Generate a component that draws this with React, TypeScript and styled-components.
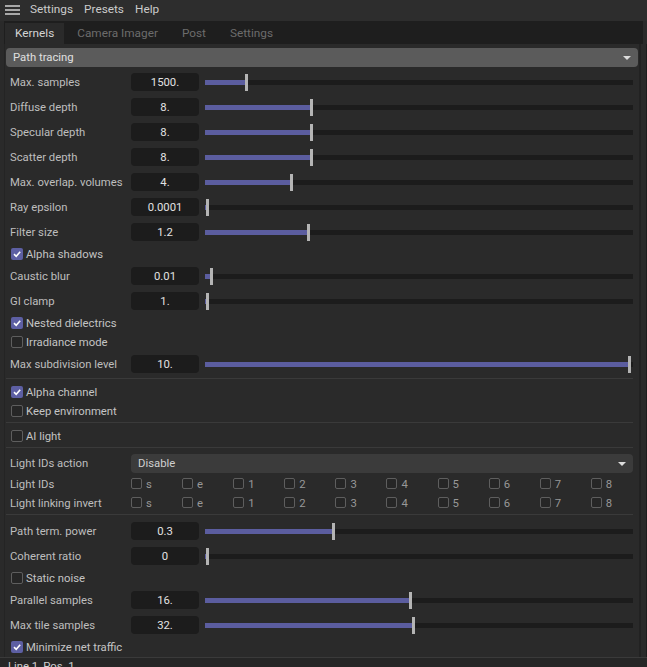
import { createGlobalStyle, styled } from 'styled-components';

type Row =
  | { kind: 'slider'; label: string; value: string; pos: number }
  | { kind: 'check'; label: string; checked?: boolean }
  | { kind: 'select'; label: string; value: string }
  | { kind: 'ids'; label: string };

const sections: Row[][] = [
  [
    { kind: 'slider', label: 'Max. samples', value: '1500.', pos: 0.094 },
    { kind: 'slider', label: 'Diffuse depth', value: '8.', pos: 0.248 },
    { kind: 'slider', label: 'Specular depth', value: '8.', pos: 0.248 },
    { kind: 'slider', label: 'Scatter depth', value: '8.', pos: 0.248 },
    { kind: 'slider', label: 'Max. overlap. volumes', value: '4.', pos: 0.199 },
    { kind: 'slider', label: 'Ray epsilon', value: '0.0001', pos: 0.002 },
    { kind: 'slider', label: 'Filter size', value: '1.2', pos: 0.239 },
    { kind: 'check', label: 'Alpha shadows', checked: true },
    { kind: 'slider', label: 'Caustic blur', value: '0.01', pos: 0.011 },
    { kind: 'slider', label: 'GI clamp', value: '1.', pos: 0.002 },
    { kind: 'check', label: 'Nested dielectrics', checked: true },
    { kind: 'check', label: 'Irradiance mode' },
    { kind: 'slider', label: 'Max subdivision level', value: '10.', pos: 0.995 },
  ],
  [
    { kind: 'check', label: 'Alpha channel', checked: true },
    { kind: 'check', label: 'Keep environment' },
  ],
  [{ kind: 'check', label: 'AI light' }],
  [
    { kind: 'select', label: 'Light IDs action', value: 'Disable' },
    { kind: 'ids', label: 'Light IDs' },
    { kind: 'ids', label: 'Light linking invert' },
  ],
  [
    { kind: 'slider', label: 'Path term. power', value: '0.3', pos: 0.298 },
    { kind: 'slider', label: 'Coherent ratio', value: '0', pos: 0.002 },
    { kind: 'check', label: 'Static noise' },
    { kind: 'slider', label: 'Parallel samples', value: '16.', pos: 0.481 },
    { kind: 'slider', label: 'Max tile samples', value: '32.', pos: 0.488 },
    { kind: 'check', label: 'Minimize net traffic', checked: true },
  ],
];

const lightIds = ['s', 'e', '1', '2', '3', '4', '5', '6', '7', '8'];

const Check = ({ checked, small }: { checked?: boolean; small?: boolean }) => (
  <CheckBox $checked={checked} $small={small}>
    {checked && (
      <svg width="10" height="10" viewBox="0 0 10 10">
        <path d="M2 5.2 L4.2 7.3 L8.2 2.8" fill="none" stroke="#fff" strokeWidth="1.6" />
      </svg>
    )}
  </CheckBox>
);

const Slider = ({ pos }: { pos: number }) => (
  <Track>
    <Fill style={{ width: `calc(${pos * 100}% - ${pos * 3 - 1.5}px)` }} />
    <Thumb style={{ left: `calc(${pos * 100}% - ${pos * 3}px)` }} />
  </Track>
);

const renderRow = (row: Row, i: number) => {
  switch (row.kind) {
    case 'slider':
      return (
        <SliderRow key={i}>
          <Label>{row.label}</Label>
          <ValueBox>{row.value}</ValueBox>
          <Slider pos={row.pos} />
        </SliderRow>
      );
    case 'check':
      return (
        <CheckRow key={i}>
          <Check checked={row.checked} />
          <CheckLabel>{row.label}</CheckLabel>
        </CheckRow>
      );
    case 'select':
      return (
        <SelectRow key={i}>
          <Label>{row.label}</Label>
          <Select>
            {row.value}
            <Caret />
          </Select>
        </SelectRow>
      );
    case 'ids':
      return (
        <IdsRow key={i}>
          <Label>{row.label}</Label>
          <IdGrid>
            {lightIds.map((id) => (
              <IdItem key={id}>
                <Check small />
                <span>{id}</span>
              </IdItem>
            ))}
          </IdGrid>
        </IdsRow>
      );
  }
};

export default function App() {
  return (
    <Screen>
      <GlobalStyle />
      <MenuBar>
        <Burger>
          <span />
          <span />
          <span />
        </Burger>
        <MenuItem>Settings</MenuItem>
        <MenuItem>Presets</MenuItem>
        <MenuItem>Help</MenuItem>
      </MenuBar>
      <TabBar>
        <Tab $active>Kernels</Tab>
        <Tab>Camera Imager</Tab>
        <Tab>Post</Tab>
        <Tab>Settings</Tab>
      </TabBar>
      <Body>
        <Panel>
          <ModeSelect>
            Path tracing
            <Caret />
          </ModeSelect>
          {sections.map((rows, i) => (
            <Section key={i} $first={i === 0} $last={i === sections.length - 1}>
              {rows.map(renderRow)}
            </Section>
          ))}
        </Panel>
        <Gutter />
      </Body>
      <StatusBar>Line 1, Pos. 1</StatusBar>
    </Screen>
  );
}

const GlobalStyle = createGlobalStyle`
  body {
    margin: 0;
    background: #2a2a2a;
    font-family: Roboto, "Noto Sans", sans-serif;
    font-size: 11.3px;
    line-height: 1.2;
    color: #c0c0c0;
  }
`;

const Screen = styled.div`
  width: 647px;
  height: 667px;
  overflow: hidden;
  background: #2a2a2a;
`;

const MenuBar = styled.div`
  box-sizing: border-box;
  height: 21px;
  padding-bottom: 2px;
  display: flex;
  align-items: center;
  background: #2d2d2d;
`;

const Burger = styled.div`
  width: 15px;
  margin: 0 10px 0 5px;
  display: flex;
  flex-direction: column;
  gap: 2px;

  & > span {
    display: block;
    height: 2px;
    background: #a8a8a8;
  }
`;

const MenuItem = styled.span`
  margin-right: 11px;
  font-size: 11.8px;
  color: #cbcbcb;
`;

const TabBar = styled.div`
  height: 23px;
  margin: 0 4px;
  padding-left: 1px;
  display: flex;
  align-items: flex-end;
  background: #1e1e1e;
`;

const Tab = styled.div<{ $active?: boolean }>`
  height: 21px;
  display: flex;
  align-items: center;
  padding: 0 ${(p) => (p.$active ? '10px' : '12px')};
  margin-right: ${(p) => (p.$active ? '1px' : '0')};
  font-size: 11.8px;
  background: ${(p) => (p.$active ? '#2a2a2a' : 'transparent')};
  color: ${(p) => (p.$active ? '#d4d4d4' : '#6c6c6c')};
`;

const Body = styled.div`
  height: 613px;
  display: flex;
  overflow: hidden;
`;

const Panel = styled.div`
  flex: 1;
  min-width: 0;
  margin-left: 4px;
  padding: 4px 1px 0 1px;
  border-left: 1px solid #242424;
`;

const Gutter = styled.div`
  width: 5px;
  flex-shrink: 0;
  border-left: 2px solid #222;
  border-right: 1px solid #1d1d1d;
  background: #2a2a2a;
`;

const ModeSelect = styled.div`
  height: 19px;
  padding: 0 7px;
  display: flex;
  align-items: center;
  justify-content: space-between;
  border-radius: 4px;
  background: #5b5b5b;
  color: #e0e0e0;
`;

const Caret = styled.span`
  width: 0;
  height: 0;
  border-left: 4px solid transparent;
  border-right: 4px solid transparent;
  border-top: 4px solid #dcdcdc;
`;

const Section = styled.div<{ $first?: boolean; $last?: boolean }>`
  margin-right: 5px;
  padding: ${(p) => (p.$first ? '2.5px' : '4px')} 0 1px;
  border-bottom: ${(p) => (p.$last ? 'none' : '1px solid #3a3a3a')};
`;

const SliderRow = styled.div`
  height: 25px;
  padding-left: 4px;
  display: flex;
  align-items: center;
`;

const Label = styled.span`
  width: 121px;
  padding-top: 2px;
  flex-shrink: 0;
  white-space: nowrap;
  color: #bebebe;
`;

const ValueBox = styled.div`
  box-sizing: border-box;
  width: 68px;
  height: 18px;
  padding-top: 2px;
  margin-right: 6px;
  flex-shrink: 0;
  display: flex;
  align-items: center;
  justify-content: center;
  border-radius: 4px;
  background: #1c1c1c;
  color: #e2e2e2;
`;

const Track = styled.div`
  position: relative;
  flex: 1;
  height: 5px;
  background: #1c1c1c;
`;

const Fill = styled.div`
  position: absolute;
  left: 0;
  top: 0;
  bottom: 0;
  background: #5b5d9f;
`;

const Thumb = styled.div`
  position: absolute;
  top: -6px;
  width: 3px;
  height: 17px;
  background: #b4b4b4;
`;

const CheckRow = styled.div`
  height: 19px;
  padding-left: 5px;
  display: flex;
  align-items: center;
`;

const CheckBox = styled.span<{ $checked?: boolean; $small?: boolean }>`
  box-sizing: border-box;
  width: ${(p) => (p.$small ? '11px' : '12px')};
  height: ${(p) => (p.$small ? '11px' : '12px')};
  margin-right: ${(p) => (p.$small ? '4px' : '3px')};
  flex-shrink: 0;
  display: flex;
  align-items: center;
  justify-content: center;
  border-radius: 2px;
  border: ${(p) => (p.$checked ? 'none' : '1.5px solid #5e5e5e')};
  background: ${(p) => (p.$checked ? '#5d5fa3' : '#262626')};
`;

const CheckLabel = styled.span`
  padding-top: 2px;
  color: #c4c4c4;
`;

const SelectRow = styled.div`
  height: 23px;
  padding-left: 4px;
  display: flex;
  align-items: center;
`;

const Select = styled.div`
  box-sizing: border-box;
  flex: 1;
  height: 19px;
  padding: 2px 7px 0;
  display: flex;
  align-items: center;
  justify-content: space-between;
  border-radius: 4px;
  background: #3b3b3b;
  color: #d0d0d0;
`;

const IdsRow = styled.div`
  height: 19px;
  padding-left: 4px;
  display: flex;
  align-items: center;
`;

const IdGrid = styled.div`
  flex: 1;
  display: grid;
  grid-template-columns: repeat(9, 51.1px) auto;
`;

const IdItem = styled.div`
  display: flex;
  align-items: center;
  color: #989898;

  & > span:last-child {
    padding-top: 2px;
  }
`;

const StatusBar = styled.div`
  height: 22px;
  padding: 2px 8px 0;
  border-top: 1px solid #3a3a3a;
  background: #262626;
  color: #cfcfcf;
`;
